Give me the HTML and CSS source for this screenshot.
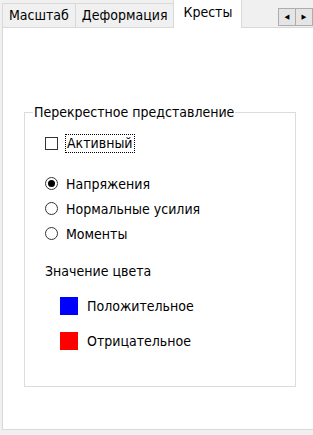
FILE: index.html
```html
<!DOCTYPE html>
<html lang="ru">
<head>
    <meta charset="UTF-8">
    <title>Кресты</title>
    <link rel="stylesheet" href="styles.css">
</head>
<body>

    <div class="tabs">
        <div class="tab">Масштаб</div>
        <div class="tab">Деформация</div>
        <div class="tab active">Кресты</div>
        <div class="scroll">
            <span class="arrow">&#9664;</span>
            <span class="arrow">&#9654;</span>
        </div>
    </div>

    <div class="panel">
        <fieldset class="group">
            <legend>Перекрестное представление</legend>

            <div class="group-body">
                <label class="check">
                    <span class="box"></span>
                    <span class="focus">Активный</span>
                </label>

                <!-- Тип отображения -->
                <div class="radios">
                    <label class="radio"><span class="dot checked"></span>Напряжения</label>
                    <label class="radio"><span class="dot"></span>Нормальные усилия</label>
                    <label class="radio"><span class="dot"></span>Моменты</label>
                </div>

                <div class="colors-title">Значение цвета</div>
                <div class="colors">
                    <div class="color-row"><span class="swatch blue"></span>Положительное</div>
                    <div class="color-row"><span class="swatch red"></span>Отрицательное</div>
                </div>
            </div>
        </fieldset>
    </div>

</body>
</html>
```

FILE: styles.css
```css
body {
    font-family: 'DejaVu Sans Condensed', 'DejaVu Sans', sans-serif;
    font-size: 14px;
    color: #000;
    background-color: #f0f0f0;
    margin: 0;
    width: 313px;
    height: 435px;
    overflow: hidden;
}

.tabs {
    display: flex;
    align-items: flex-end;
    height: 27px;
    padding-left: 2px;
    position: relative;
    z-index: 1;
}

.tab {
    height: 23px;
    line-height: 23px;
    padding: 0 6px;
    border: 1px solid #d9d9d9;
    border-bottom: none;
    margin-right: -1px;
}

.tab.active {
    height: 28px;
    line-height: 25px;
    background-color: #fff;
    padding: 0 9px;
    margin-bottom: -1px;
}

.scroll {
    margin-left: auto;
    align-self: flex-start;
    margin-top: 8px;
    display: flex;
}

.arrow {
    width: 16px;
    height: 16px;
    border: 1px solid #adadad;
    background-color: #e5e5e5;
    font-size: 7px;
    line-height: 16px;
    text-align: center;
    margin-left: -1px;
}

.panel {
    margin-left: 2px;
    height: 403px;
    background-color: #fff;
    border: 1px solid #d9d9d9;
    border-right: none;
    padding: 76px 0 0 21px;
    box-sizing: border-box;
}

.group {
    width: 272px;
    height: 283px;
    box-sizing: border-box;
    margin: 0;
    padding: 0;
    border: 1px solid #dcdcdc;
}

.group legend {
    padding: 0 1px;
    margin-left: 8px;
}

.group-body {
    padding: 14px 0 0 20px;
}

.check {
    display: flex;
    align-items: center;
    height: 18px;
}

.box {
    width: 13px;
    height: 13px;
    box-sizing: border-box;
    border: 1px solid #333;
    margin-right: 8px;
}

.focus {
    outline: 1px dotted #000;
    padding: 0 1px;
    line-height: 17px;
}

.radios {
    margin-top: 19px;
}

.radio {
    display: flex;
    align-items: center;
    height: 25px;
}

.dot {
    width: 13px;
    height: 13px;
    box-sizing: border-box;
    border: 1px solid #333;
    border-radius: 50%;
    margin-right: 8px;
    display: flex;
    align-items: center;
    justify-content: center;
}

.dot.checked::after {
    content: "";
    width: 7px;
    height: 7px;
    border-radius: 50%;
    background-color: #000;
}

.colors-title {
    margin-top: 17px;
}

.colors {
    margin-top: 9px;
    margin-left: 15px;
}

.color-row {
    display: flex;
    align-items: center;
    height: 35px;
}

.swatch {
    width: 18px;
    height: 18px;
    margin-right: 9px;
}

.blue {
    background-color: #0000ff;
}

.red {
    background-color: #ff0000;
}
```
